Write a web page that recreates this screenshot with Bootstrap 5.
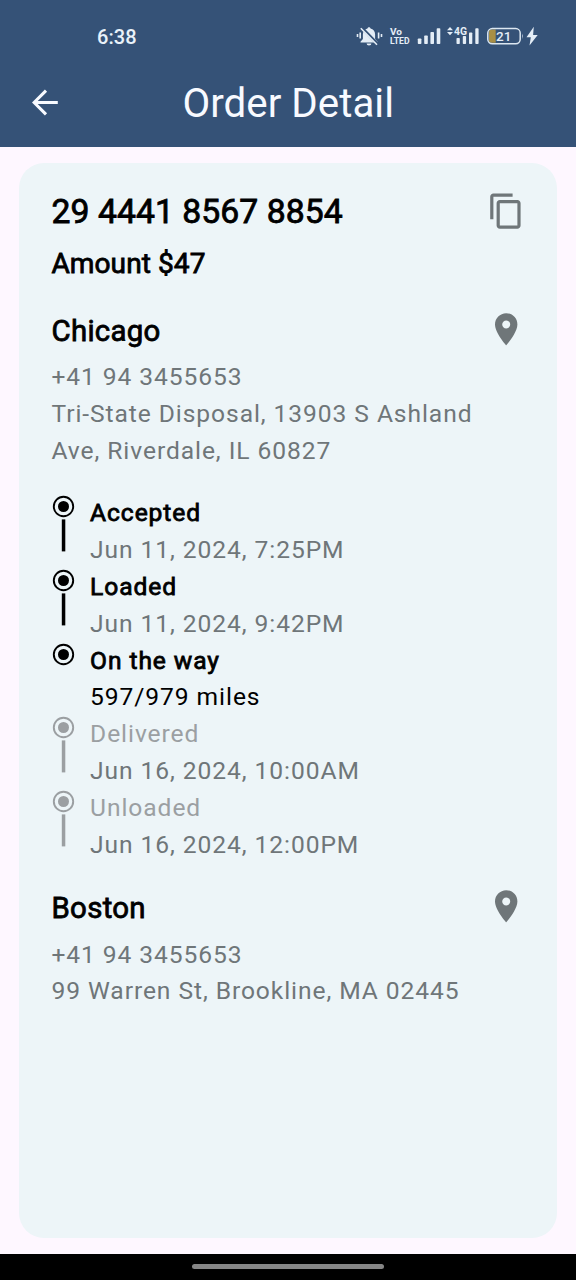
<!DOCTYPE html>
<html lang="en">
<head>
<meta charset="utf-8">
<meta name="viewport" content="width=device-width, initial-scale=1">
<title>Order Detail</title>
<link href="https://cdn.jsdelivr.net/npm/bootstrap@5.3.0/dist/css/bootstrap.min.css" rel="stylesheet">
<style>
body{font-family:Roboto,"Noto Sans",sans-serif;background:#fef7ff;font-size:24.6px;line-height:36.8px;letter-spacing:.92px;color:#000}
.screen{height:1280px}
.top-area{background:#355277;height:147px;color:#f8faff}
.status{height:58px;padding:15px 38px 0 97px;color:#e9f2fa}
.clock{font-size:20px;line-height:44px;letter-spacing:.1px;font-weight:500}
.app-bar{height:89px;padding-left:32px}
.app-title{font-size:40.3px;line-height:48px;letter-spacing:.02px;margin:3px 0 0 123.5px}
.order-card{background:#edf5f8;border-radius:25px;margin:16px 19px 0 19.2px;height:1075px;padding:27px 32px 0 32.3px}
.heavy{-webkit-text-stroke:.8px currentColor}
.number{font-size:33.73px;line-height:44px;letter-spacing:.05px}
.amount{font-size:28.1px;line-height:40px;letter-spacing:.05px;margin-top:10.2px}
.copy-icon{margin-bottom:2px}
.place{font-size:29.4px;line-height:42px;letter-spacing:.3px}
.place-row{margin-top:25.8px;margin-bottom:7.2px}
.place-row.second{margin-top:24px}
.muted{color:#6f7679}
.later{color:#9b9fa2}
.timeline{margin-top:25.8px}
.step-mark{width:25px;margin-right:13.6px}
.nav-area{background:#000;height:26px}
.pill{width:192px;height:5px;border-radius:3px;background:#858585;margin-top:-1px}
</style>
</head>
<body>
<div class="screen d-flex flex-column overflow-hidden">
  <header class="top-area flex-shrink-0">
    <div class="status d-flex justify-content-between align-items-start">
      <span class="clock">6:38</span>
      <svg width="183" height="43" viewBox="355 15 183 43" fill="#e4edf6">
        <path d="M369 27.200c.9 0 1.500.6 1.500 1.300 2.800.7 4.600 3 4.600 5.900v4.600l2.400 2.700v.9h-17v-.9l2.400-2.700v-4.600c0-2.900 1.800-5.200 4.600-5.900 0-.7.6-1.300 1.500-1.300zM366.600 43.600h4.800a2.400 2 0 0 1-4.800 0z"/>
        <path d="M362 28l15.500 16" stroke="#355277" stroke-width="3.200"/>
        <path d="M360.800 28.200l16.200 16.600M360.200 32.500v6M357.500 34v3M378.600 32.500v6M381.500 34v3" stroke="#e4edf6" stroke-width="1.600"/>
        <g font-family="Roboto" font-weight="700" letter-spacing="0"><text x="390" y="34.800" font-size="8.600" textLength="12" lengthAdjust="spacingAndGlyphs">Vo</text><text x="390" y="44.200" font-size="8.600" textLength="19.500" lengthAdjust="spacingAndGlyphs">LTED</text></g>
        <g><rect x="417.800" y="38.500" width="3.600" height="5.500" rx=".8"/><rect x="424.200" y="35.500" width="3.600" height="8.500" rx=".8"/><rect x="430.400" y="32" width="3.600" height="12" rx=".8"/><rect x="436.700" y="28.300" width="3.600" height="15.700" rx=".8"/></g>
        <path d="M447 30.300l3-3.300 3 3.300zM447 32l3 3.300 3-3.300z"/>
        <text x="454" y="35" font-family="Roboto" font-size="11" font-weight="700" letter-spacing="0" textLength="13" lengthAdjust="spacingAndGlyphs">4G</text>
        <rect x="456.500" y="38" width="3.300" height="6" rx=".8"/><rect x="462.800" y="36" width="3.300" height="8" rx=".8"/><rect x="469" y="32.500" width="3.300" height="11.500" rx=".8"/><rect x="475.300" y="28.300" width="3.300" height="15.700" rx=".8"/>
        <path d="M491.500 29.500h4.200v13.200h-4.200a2.500 2.500 0 0 1-2.500-2.500v-8.200a2.500 2.500 0 0 1 2.500-2.500z" fill="#a88f45"/>
        <rect x="487.800" y="28.600" width="32.400" height="15.200" rx="4.500" fill="none" stroke="#dce7f1" stroke-width="1.500"/>
        <path d="M522 33.500q1.500 2.700 0 5.400z"/>
        <text x="496" y="41" font-family="Roboto" font-size="13.500" font-weight="500" letter-spacing="0">21</text>
        <path d="M533.800 26.800l-7.300 10.400h4.300l-1.300 8.300 8.200-10.600h-4.600z"/>
      </svg>
    </div>
    <div class="app-bar d-flex align-items-center">
      <svg width="27" height="27" viewBox="0 0 27 27" fill="none" stroke="#f8faff" stroke-width="3.100"><path d="M14 1.600L2.100 13.500l11.900 11.900M2.100 13.500H25.800"/></svg>
      <h1 class="app-title fw-normal">Order Detail</h1>
    </div>
  </header>

  <main class="flex-grow-1">
    <section class="order-card">
      <div class="d-flex justify-content-between align-items-center">
        <div class="number heavy">29 4441 8567 8854</div>
        <svg class="copy-icon" width="38.400" height="38.400" viewBox="0 0 24 24" fill="#6f7679"><path d="M16 1H4c-1.100 0-2 .9-2 2v14h2V3h12V1zm3 4H8c-1.100 0-2 .9-2 2v14c0 1.100.9 2 2 2h11c1.100 0 2-.9 2-2V7c0-1.100-.9-2-2-2zm0 16H8V7h11v14z"/></svg>
      </div>
      <div class="amount heavy">Amount $47</div>

      <div class="place-row d-flex justify-content-between align-items-start">
        <div class="place heavy">Chicago</div>
        <svg width="38.400" height="38.400" viewBox="0 0 24 24" fill="#6f7679"><path d="M12 2C8.130 2 5 5.130 5 9c0 5.250 7 13 7 13s7-7.750 7-13c0-3.870-3.130-7-7-7zm0 9.500c-1.380 0-2.500-1.120-2.500-2.500s1.120-2.500 2.500-2.500 2.500 1.120 2.500 2.500-1.120 2.500-2.500 2.500z"/></svg>
      </div>
      <div class="muted">+41 94 3455653<br>Tri-State Disposal, 13903 S Ashland<br>Ave, Riverdale, IL 60827</div>

      <svg class="d-none"><defs>
        <g id="dot"><circle cx="12.500" cy="11.500" r="9.700" fill="none" stroke="currentColor" stroke-width="1.900"/><circle cx="12.500" cy="11.500" r="5.500" fill="currentColor"/></g>
        <g id="stem"><rect x="10.800" y="24.400" width="3.500" height="32" fill="currentColor"/></g>
      </defs></svg>
      <div class="timeline">
        <div class="d-flex"><div class="step-mark"><svg class="d-block" width="25" height="60"><use href="#dot"/><use href="#stem"/></svg></div><div><div class="heavy">Accepted</div><div class="muted">Jun 11, 2024, 7:25PM</div></div></div>
        <div class="d-flex"><div class="step-mark"><svg class="d-block" width="25" height="60"><use href="#dot"/><use href="#stem"/></svg></div><div><div class="heavy">Loaded</div><div class="muted">Jun 11, 2024, 9:42PM</div></div></div>
        <div class="d-flex"><div class="step-mark"><svg class="d-block" width="25" height="60"><use href="#dot"/></svg></div><div><div class="heavy">On the way</div><div>597/979 miles</div></div></div>
        <div class="d-flex"><div class="step-mark later"><svg class="d-block" width="25" height="60"><use href="#dot"/><use href="#stem"/></svg></div><div><div class="later">Delivered</div><div class="muted">Jun 16, 2024, 10:00AM</div></div></div>
        <div class="d-flex"><div class="step-mark later"><svg class="d-block" width="25" height="60"><use href="#dot"/><use href="#stem"/></svg></div><div><div class="later">Unloaded</div><div class="muted">Jun 16, 2024, 12:00PM</div></div></div>
      </div>

      <div class="place-row second d-flex justify-content-between align-items-start">
        <div class="place heavy">Boston</div>
        <svg width="38.400" height="38.400" viewBox="0 0 24 24" fill="#6f7679"><path d="M12 2C8.130 2 5 5.130 5 9c0 5.250 7 13 7 13s7-7.750 7-13c0-3.870-3.130-7-7-7zm0 9.500c-1.380 0-2.500-1.120-2.500-2.500s1.120-2.500 2.500-2.500 2.500 1.120 2.500 2.500-1.120 2.500-2.500 2.500z"/></svg>
      </div>
      <div class="muted">+41 94 3455653<br>99 Warren St, Brookline, MA 02445</div>
    </section>
  </main>
  <footer class="nav-area flex-shrink-0 d-flex justify-content-center align-items-center"><div class="pill"></div></footer>
</div>
<script src="https://cdn.jsdelivr.net/npm/bootstrap@5.3.0/dist/js/bootstrap.bundle.min.js"></script>
</body>
</html>
